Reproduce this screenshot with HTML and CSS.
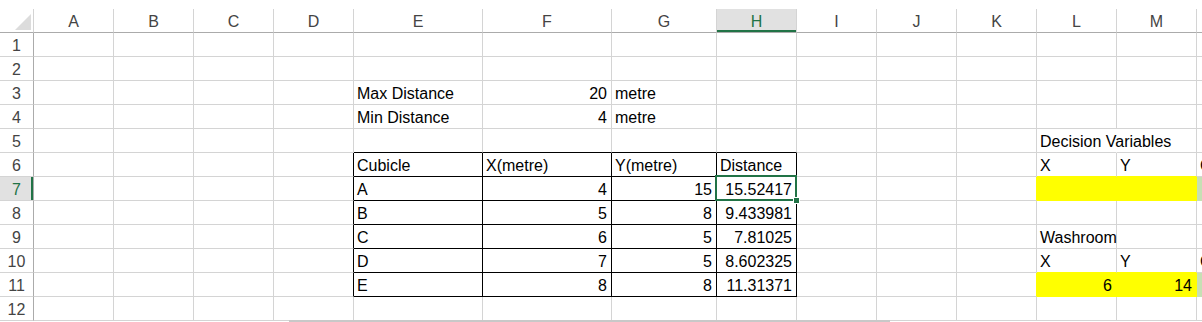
FILE: index.html
```html
<!DOCTYPE html>
<html lang="en">
<head>
    <meta charset="UTF-8">
    <meta name="viewport" content="width=device-width, initial-scale=1.0">
    <title>Washroom location</title>
    <link rel="stylesheet" href="styles.css">
</head>
<body>
    <div class="sheet">
        <div class="top-gap"></div>

        <!-- Column headers -->
        <div class="row head">
            <div class="corner"><svg width="16" height="16" viewBox="0 0 16 16"><polygon points="16,0 16,16 0,16" fill="#dcdcdc"/></svg></div>
            <div>A</div><div>B</div><div>C</div><div>D</div><div>E</div><div>F</div><div>G</div>
            <div class="sel">H</div>
            <div>I</div><div>J</div><div>K</div><div>L</div><div>M</div><div></div>
        </div>

        <div class="row"><div class="rh">1</div><div></div><div></div><div></div><div></div><div></div><div></div><div></div><div></div><div></div><div></div><div></div><div></div><div></div><div></div></div>
        <div class="row"><div class="rh">2</div><div></div><div></div><div></div><div></div><div></div><div></div><div></div><div></div><div></div><div></div><div></div><div></div><div></div><div></div></div>
        <div class="row"><div class="rh">3</div><div></div><div></div><div></div><div></div><div>Max Distance</div><div class="num">20</div><div>metre</div><div></div><div></div><div></div><div></div><div></div><div></div><div></div></div>
        <div class="row"><div class="rh">4</div><div></div><div></div><div></div><div></div><div>Min Distance</div><div class="num">4</div><div>metre</div><div></div><div></div><div></div><div></div><div></div><div></div><div></div></div>
        <div class="row"><div class="rh">5</div><div></div><div></div><div></div><div></div><div class="bx-t"></div><div class="bx-t"></div><div class="bx-t"></div><div class="bx-t"></div><div></div><div></div><div></div><div class="spill">Decision Variables</div><div></div><div></div></div>
        <div class="row"><div class="rh">6</div><div></div><div></div><div></div><div class="bx-l"></div><div class="bx">Cubicle</div><div class="bx">X(metre)</div><div class="bx">Y(metre)</div><div class="bx">Distance</div><div></div><div></div><div></div><div class="fill-t">X</div><div class="fill-t">Y</div><div>C</div></div>
        <div class="row"><div class="rh sel">7</div><div></div><div></div><div></div><div class="bx-l"></div><div class="bx">A</div><div class="bx num">4</div><div class="bx num">15</div><div class="bx num active">15.52417</div><div></div><div></div><div class="fill-l"></div><div class="fill"></div><div class="fill"></div><div class="green"></div></div>
        <div class="row"><div class="rh">8</div><div></div><div></div><div></div><div class="bx-l"></div><div class="bx">B</div><div class="bx num">5</div><div class="bx num">8</div><div class="bx num">9.433981</div><div></div><div></div><div></div><div></div><div></div><div></div></div>
        <div class="row"><div class="rh">9</div><div></div><div></div><div></div><div class="bx-l"></div><div class="bx">C</div><div class="bx num">6</div><div class="bx num">5</div><div class="bx num">7.81025</div><div></div><div></div><div></div><div>Washroom</div><div></div><div></div></div>
        <div class="row"><div class="rh">10</div><div></div><div></div><div></div><div class="bx-l"></div><div class="bx">D</div><div class="bx num">7</div><div class="bx num">5</div><div class="bx num">8.602325</div><div></div><div></div><div></div><div class="fill-t">X</div><div class="fill-t">Y</div><div>C</div></div>
        <div class="row"><div class="rh">11</div><div></div><div></div><div></div><div class="bx-l"></div><div class="bx">E</div><div class="bx num">8</div><div class="bx num">8</div><div class="bx num">11.31371</div><div></div><div></div><div class="fill-l"></div><div class="fill num">6</div><div class="fill num">14</div><div class="green"></div></div>
        <div class="row"><div class="rh">12</div><div></div><div></div><div></div><div></div><div></div><div></div><div></div><div></div><div></div><div></div><div></div><div></div><div></div><div></div></div>

        <!-- Horizontal scrollbar thumb -->
        <div class="hscroll"></div>
    </div>
</body>
</html>
```

FILE: styles.css
```css
body {
    margin: 0;
    padding: 0;
    background: #ffffff;
    font-family: "Liberation Sans", Arial, sans-serif;
    font-size: 16px;
    color: #000000;
    overflow: hidden;
}

.sheet {
    position: relative;
    width: 1202px;
    height: 322px;
}

.top-gap {
    height: 9px;
}

.row {
    display: grid;
    grid-template-columns: 34px 80px 80px 80px 80px 129px 129px 105px 80px 80px 80px 80px 80px 80px 1fr;
    height: 24px;
}

.row > div {
    box-sizing: border-box;
    border-right: 1px solid #d4d4d4;
    border-bottom: 1px solid #d4d4d4;
    padding: 3px 3px 0;
    line-height: 20px;
    white-space: nowrap;
}

/* Headers */
.head > div {
    text-align: center;
    color: #444444;
    border-bottom-color: #ababab;
}

.head .corner {
    display: flex;
    justify-content: flex-end;
    align-items: flex-end;
    padding: 0 2px 2px 0;
}

.row .rh {
    text-align: center;
    color: #444444;
    border-right-color: #ababab;
}

.head .sel {
    background: #e1e1e1;
    color: #217346;
    box-shadow: inset 0 -2px 0 #217346;
}

.row .rh.sel {
    background: #e1e1e1;
    color: #217346;
    box-shadow: inset -2px 0 0 #217346;
}

/* Cells */
.row .num {
    text-align: right;
    padding-right: 4px;
}

.row .spill {
    border-right-color: transparent;
}

.row .bx {
    border-right-color: #000000;
    border-bottom-color: #000000;
}

.row .bx-l {
    border-right-color: #000000;
}

.row .bx-t {
    border-bottom-color: #000000;
}

.row .fill {
    background: #ffff00;
    border-right-color: #ffff00;
    border-bottom-color: #ffff00;
}

.row .fill-l {
    border-right-color: #ffff00;
}

.row .fill-t {
    border-bottom-color: #ffff00;
}

.row .green {
    background: #c6e0b4;
    border-bottom-color: #c6e0b4;
}

/* Selected cell H7 */
.row .active {
    position: relative;
}

.row .active::before {
    content: '';
    position: absolute;
    top: -2px;
    left: -2px;
    right: -1px;
    bottom: -1px;
    border: 2px solid #217346;
    z-index: 1;
}

.row .active::after {
    content: '';
    position: absolute;
    right: -4px;
    bottom: -4px;
    width: 5px;
    height: 5px;
    background: #217346;
    border: 1px solid #ffffff;
    z-index: 2;
}

.hscroll {
    position: absolute;
    left: 289px;
    top: 320px;
    width: 601px;
    height: 2px;
    background: #c8c8c8;
}
```
